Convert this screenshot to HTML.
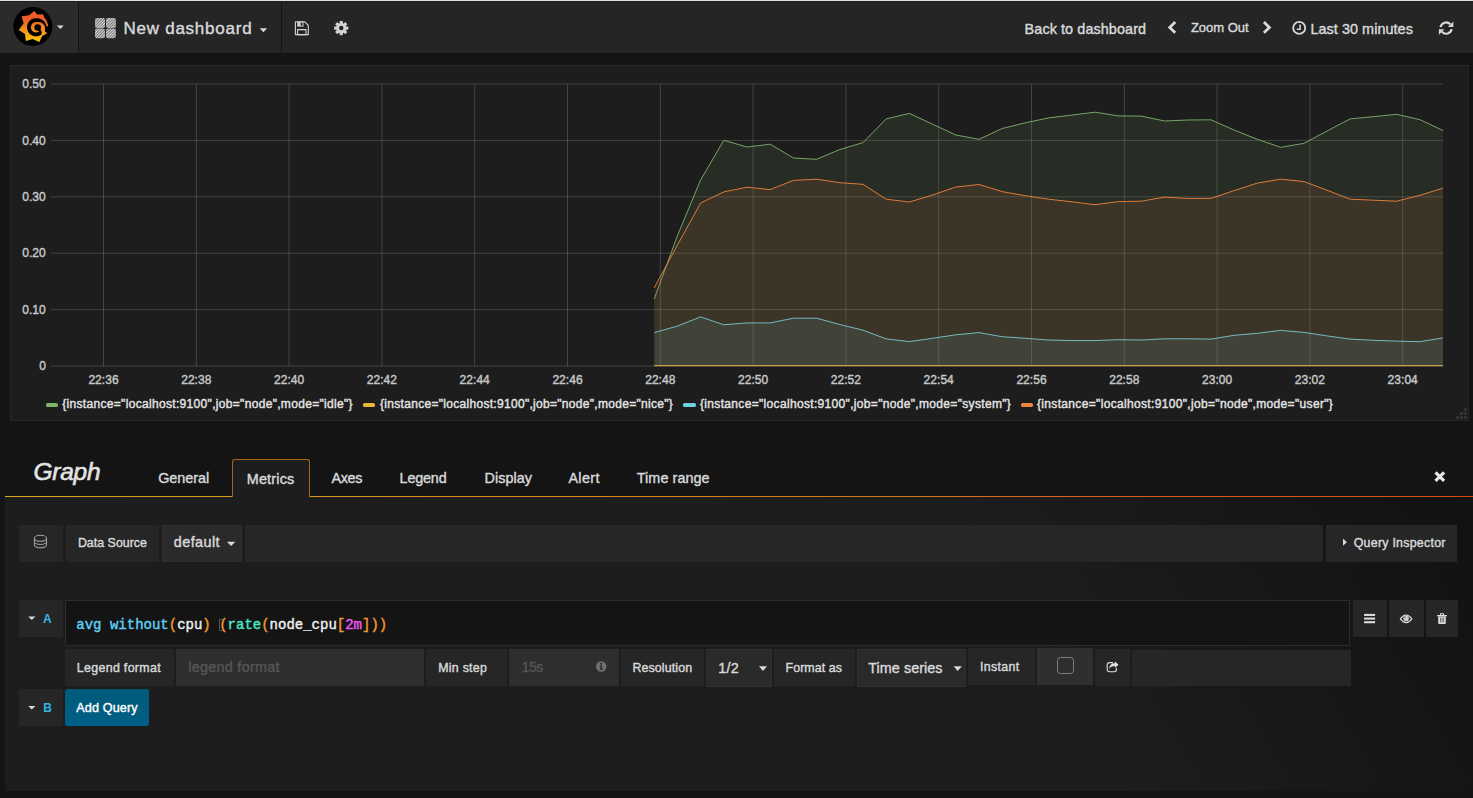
<!DOCTYPE html>
<html lang="en">
<head>
<meta charset="utf-8">
<title>Grafana - New dashboard</title>
<style>
*{box-sizing:border-box;margin:0;padding:0}
html,body{width:1473px;height:798px;overflow:hidden;background:#141414}
body{position:relative;font-family:"Liberation Sans",sans-serif;color:#d8d9da;-webkit-font-smoothing:antialiased}
.abs,.t,.b{position:absolute}
.t{white-space:nowrap;display:block;-webkit-text-stroke:0.4px currentColor}
.b{display:block}
.lbl{background:#262626}
.inp{background:#2e2e2e}
.ic{position:absolute;overflow:visible}
.code{position:absolute;left:76.3px;top:616.3px;-webkit-text-stroke:0.4px currentColor;font-family:"Liberation Mono","DejaVu Sans Mono",monospace;font-size:14px;line-height:19px;white-space:pre;color:#e8e8e8}
</style>
</head>
<body>
<!-- top edge -->
<div class="b" style="left:0;top:0;width:1473px;height:1px;background:#e0e0e0"></div>
<div class="b" style="left:0;top:1px;width:1473px;height:1px;background:#1f1f1f;z-index:2"></div>
<!-- navbar -->
<div class="b" style="left:0;top:1px;width:1473px;height:52px;background:#252525"></div>
<div class="b" style="left:0;top:1px;width:78px;height:52px;background:#2b2b2b"></div>
<div class="b" style="left:78px;top:1px;width:1px;height:52px;background:#141414"></div>
<div class="b" style="left:281px;top:1px;width:1px;height:52px;background:#141414"></div>

<!-- panel -->
<div class="b" style="left:10px;top:65px;width:1459px;height:356px;background:#1d1d1d;border:1px solid #272727"></div>
<svg class="chart" width="1473" height="440" viewBox="0 0 1473 440" style="position:absolute;left:0;top:0">
<line x1="51.0" x2="1443.0" y1="84.00" y2="84.00" stroke="rgba(200,200,200,0.22)" stroke-width="1"/>
<line x1="51.0" x2="1443.0" y1="140.40" y2="140.40" stroke="rgba(200,200,200,0.22)" stroke-width="1"/>
<line x1="51.0" x2="1443.0" y1="196.80" y2="196.80" stroke="rgba(200,200,200,0.22)" stroke-width="1"/>
<line x1="51.0" x2="1443.0" y1="253.20" y2="253.20" stroke="rgba(200,200,200,0.22)" stroke-width="1"/>
<line x1="51.0" x2="1443.0" y1="309.60" y2="309.60" stroke="rgba(200,200,200,0.22)" stroke-width="1"/>
<line x1="51.0" x2="1443.0" y1="366.00" y2="366.00" stroke="rgba(200,200,200,0.22)" stroke-width="1"/>
<line x1="103.50" x2="103.50" y1="84" y2="366.5" stroke="rgba(200,200,200,0.22)" stroke-width="1"/>
<line x1="196.30" x2="196.30" y1="84" y2="366.5" stroke="rgba(200,200,200,0.22)" stroke-width="1"/>
<line x1="289.10" x2="289.10" y1="84" y2="366.5" stroke="rgba(200,200,200,0.22)" stroke-width="1"/>
<line x1="381.90" x2="381.90" y1="84" y2="366.5" stroke="rgba(200,200,200,0.22)" stroke-width="1"/>
<line x1="474.70" x2="474.70" y1="84" y2="366.5" stroke="rgba(200,200,200,0.22)" stroke-width="1"/>
<line x1="567.50" x2="567.50" y1="84" y2="366.5" stroke="rgba(200,200,200,0.22)" stroke-width="1"/>
<line x1="660.30" x2="660.30" y1="84" y2="366.5" stroke="rgba(200,200,200,0.22)" stroke-width="1"/>
<line x1="753.10" x2="753.10" y1="84" y2="366.5" stroke="rgba(200,200,200,0.22)" stroke-width="1"/>
<line x1="845.90" x2="845.90" y1="84" y2="366.5" stroke="rgba(200,200,200,0.22)" stroke-width="1"/>
<line x1="938.70" x2="938.70" y1="84" y2="366.5" stroke="rgba(200,200,200,0.22)" stroke-width="1"/>
<line x1="1031.50" x2="1031.50" y1="84" y2="366.5" stroke="rgba(200,200,200,0.22)" stroke-width="1"/>
<line x1="1124.30" x2="1124.30" y1="84" y2="366.5" stroke="rgba(200,200,200,0.22)" stroke-width="1"/>
<line x1="1217.10" x2="1217.10" y1="84" y2="366.5" stroke="rgba(200,200,200,0.22)" stroke-width="1"/>
<line x1="1309.90" x2="1309.90" y1="84" y2="366.5" stroke="rgba(200,200,200,0.22)" stroke-width="1"/>
<line x1="1402.70" x2="1402.70" y1="84" y2="366.5" stroke="rgba(200,200,200,0.22)" stroke-width="1"/>
<path d="M654.2,366.0 L654.2,299.0 L677.4,235.8 L700.6,180.0 L723.8,140.3 L747.0,147.0 L770.2,144.2 L793.4,158.0 L816.6,159.3 L839.8,149.5 L863.0,142.6 L886.2,118.9 L909.4,113.4 L932.6,124.2 L955.8,135.0 L979.0,139.3 L1002.2,128.5 L1025.4,122.8 L1048.6,117.9 L1071.8,115.1 L1095.0,112.2 L1118.2,115.9 L1141.4,116.1 L1164.6,121.0 L1187.8,120.0 L1211.0,119.8 L1234.2,130.1 L1257.4,139.3 L1280.6,147.3 L1303.8,143.4 L1327.0,131.0 L1350.2,118.9 L1373.4,116.7 L1396.6,114.3 L1419.8,119.6 L1443.0,130.5 L1443.0,366.0 Z" fill="#7EB26D" fill-opacity="0.1"/>
<polyline points="654.2,299.0 677.4,235.8 700.6,180.0 723.8,140.3 747.0,147.0 770.2,144.2 793.4,158.0 816.6,159.3 839.8,149.5 863.0,142.6 886.2,118.9 909.4,113.4 932.6,124.2 955.8,135.0 979.0,139.3 1002.2,128.5 1025.4,122.8 1048.6,117.9 1071.8,115.1 1095.0,112.2 1118.2,115.9 1141.4,116.1 1164.6,121.0 1187.8,120.0 1211.0,119.8 1234.2,130.1 1257.4,139.3 1280.6,147.3 1303.8,143.4 1327.0,131.0 1350.2,118.9 1373.4,116.7 1396.6,114.3 1419.8,119.6 1443.0,130.5" fill="none" stroke="#7EB26D" stroke-width="1" stroke-opacity="0.9" stroke-linejoin="round"/>
<line x1="654.2" x2="1443.0" y1="365.7" y2="365.7" stroke="#c9a036" stroke-width="1.3"/>
<path d="M654.2,366.0 L654.2,332.6 L677.4,326.1 L700.6,316.9 L723.8,324.8 L747.0,322.9 L770.2,322.9 L793.4,318.2 L816.6,318.2 L839.8,324.5 L863.0,330.2 L886.2,338.9 L909.4,341.6 L932.6,338.3 L955.8,334.8 L979.0,332.6 L1002.2,336.7 L1025.4,338.3 L1048.6,340.0 L1071.8,340.6 L1095.0,340.6 L1118.2,339.7 L1141.4,340.0 L1164.6,338.8 L1187.8,338.8 L1211.0,339.1 L1234.2,335.3 L1257.4,333.3 L1280.6,330.4 L1303.8,332.4 L1327.0,335.9 L1350.2,339.1 L1373.4,340.3 L1396.6,341.1 L1419.8,341.7 L1443.0,337.9 L1443.0,366.0 Z" fill="#6ED0E0" fill-opacity="0.1"/>
<polyline points="654.2,332.6 677.4,326.1 700.6,316.9 723.8,324.8 747.0,322.9 770.2,322.9 793.4,318.2 816.6,318.2 839.8,324.5 863.0,330.2 886.2,338.9 909.4,341.6 932.6,338.3 955.8,334.8 979.0,332.6 1002.2,336.7 1025.4,338.3 1048.6,340.0 1071.8,340.6 1095.0,340.6 1118.2,339.7 1141.4,340.0 1164.6,338.8 1187.8,338.8 1211.0,339.1 1234.2,335.3 1257.4,333.3 1280.6,330.4 1303.8,332.4 1327.0,335.9 1350.2,339.1 1373.4,340.3 1396.6,341.1 1419.8,341.7 1443.0,337.9" fill="none" stroke="#6ED0E0" stroke-width="1" stroke-opacity="0.9" stroke-linejoin="round"/>
<path d="M654.2,366.0 L654.2,287.9 L677.4,245.1 L700.6,203.0 L723.8,191.9 L747.0,187.2 L770.2,189.6 L793.4,180.4 L816.6,179.2 L839.8,182.7 L863.0,184.3 L886.2,199.2 L909.4,202.0 L932.6,195.0 L955.8,187.0 L979.0,184.5 L1002.2,191.6 L1025.4,195.7 L1048.6,199.2 L1071.8,201.8 L1095.0,204.7 L1118.2,201.6 L1141.4,201.2 L1164.6,197.1 L1187.8,198.4 L1211.0,198.4 L1234.2,190.6 L1257.4,183.1 L1280.6,179.2 L1303.8,181.5 L1327.0,190.2 L1350.2,199.2 L1373.4,200.2 L1396.6,201.2 L1419.8,195.3 L1443.0,188.2 L1443.0,366.0 Z" fill="#EF843C" fill-opacity="0.1"/>
<polyline points="654.2,287.9 677.4,245.1 700.6,203.0 723.8,191.9 747.0,187.2 770.2,189.6 793.4,180.4 816.6,179.2 839.8,182.7 863.0,184.3 886.2,199.2 909.4,202.0 932.6,195.0 955.8,187.0 979.0,184.5 1002.2,191.6 1025.4,195.7 1048.6,199.2 1071.8,201.8 1095.0,204.7 1118.2,201.6 1141.4,201.2 1164.6,197.1 1187.8,198.4 1211.0,198.4 1234.2,190.6 1257.4,183.1 1280.6,179.2 1303.8,181.5 1327.0,190.2 1350.2,199.2 1373.4,200.2 1396.6,201.2 1419.8,195.3 1443.0,188.2" fill="none" stroke="#EF843C" stroke-width="1" stroke-opacity="0.9" stroke-linejoin="round"/>
</svg>

<!-- legend swatches -->
<div class="b" style="left:45.6px;top:402.8px;width:12.8px;height:3.8px;border-radius:1.6px;background:#7EB26D"></div>
<div class="b" style="left:362.5px;top:402.8px;width:12.8px;height:3.8px;border-radius:1.6px;background:#EAB839"></div>
<div class="b" style="left:683px;top:402.8px;width:12.8px;height:3.8px;border-radius:1.6px;background:#6ED0E0"></div>
<div class="b" style="left:1020.5px;top:402.8px;width:12.8px;height:3.8px;border-radius:1.6px;background:#EF843C"></div>

<!-- editor area -->
<div class="b" style="left:5px;top:497px;width:1468px;height:294px;background:linear-gradient(60deg,rgba(19,18,18,0) 68%,#131212 98%),#1e1d1d"></div>
<div class="b" style="left:5px;top:496px;width:1468px;height:1.3px;background:linear-gradient(90deg,#d9a521 0%,#d9861f 40%,#d24a12 100%)"></div>
<!-- active tab -->
<div class="b" style="left:232px;top:459px;width:78px;height:38px;background:#1e1d1d;border:1px solid #a8641c;border-bottom:none;border-radius:3px 3px 0 0"></div>

<!-- data source row -->
<div class="b lbl" style="left:19px;top:525.2px;width:44px;height:36.4px"></div>
<div class="b lbl" style="left:66px;top:525.2px;width:93px;height:36.4px"></div>
<div class="b inp" style="left:162px;top:525.2px;width:80px;height:36.8px;background:#2a2a2a;border:1px solid #303030"></div>
<div class="b lbl" style="left:245px;top:525.2px;width:1078px;height:36.4px"></div>
<div class="b lbl" style="left:1326px;top:525.2px;width:130.8px;height:36.4px"></div>

<!-- query A -->
<div class="b lbl" style="left:19px;top:600.3px;width:44px;height:36.4px"></div>
<div class="b" style="left:65px;top:600.3px;width:1285px;height:45.4px;background:#141414;border:1px solid #2c2c2c"></div>
<div class="b lbl" style="left:1353px;top:600.3px;width:34px;height:36.4px"></div>
<div class="b lbl" style="left:1389px;top:600.3px;width:35px;height:36.4px"></div>
<div class="b lbl" style="left:1426px;top:600.3px;width:32px;height:36.4px"></div>
<div class="code"><span style="color:#5fd0f5">avg</span> <span style="color:#5fd0f5">without</span><span style="color:#f59a2e">(</span><span style="color:#f0f0f0">cpu</span><span style="color:#f59a2e">)</span> <span style="color:#f59a2e">(</span><span style="color:#4ee6c6">rate</span><span style="color:#f59a2e">(</span><span style="color:#f0f0f0">node_cpu</span><span style="color:#f59a2e">[</span><span style="color:#f05af0">2m</span><span style="color:#f59a2e">]</span><span style="color:#f59a2e">))</span></div>
<div class="b" style="left:218.6px;top:618.6px;width:4.6px;height:12px;border:1px solid #555;border-right:none;border-radius:1px"></div>

<!-- options row -->
<div class="b lbl" style="left:65px;top:649.2px;width:109px;height:36.4px"></div>
<div class="b inp" style="left:176px;top:649.2px;width:248px;height:36.4px"></div>
<div class="b lbl" style="left:426px;top:649.2px;width:81px;height:36.4px"></div>
<div class="b inp" style="left:509px;top:649.2px;width:110px;height:36.4px"></div>
<div class="b lbl" style="left:621px;top:649.2px;width:82.6px;height:36.4px"></div>
<div class="b inp" style="left:706px;top:649.2px;width:66px;height:37.4px;background:#2a2a2a;border:1px solid #303030"></div>
<div class="b lbl" style="left:774px;top:649.2px;width:81px;height:36.4px"></div>
<div class="b inp" style="left:857px;top:649.2px;width:109px;height:37.4px;background:#2a2a2a;border:1px solid #303030"></div>
<div class="b lbl" style="left:968px;top:648px;width:67px;height:36.6px"></div>
<div class="b inp" style="left:1037px;top:648px;width:56px;height:37px;background:#2f2f2f"></div>
<div class="b lbl" style="left:1095px;top:649.2px;width:35px;height:36.4px"></div>
<div class="b lbl" style="left:1132px;top:650.2px;width:219px;height:35.4px"></div>
<div class="b" style="left:1057px;top:657px;width:17px;height:16.6px;border:1.8px solid #808080;border-radius:3.5px;background:#2f2f2f"></div>

<!-- query B -->
<div class="b lbl" style="left:19px;top:689px;width:44px;height:36.6px"></div>
<div class="b" style="left:65px;top:689px;width:84px;height:36.6px;background:linear-gradient(#005a7a,#006088);border-radius:2.5px"></div>

<svg class="ic" style="left:0;top:0" width="1473" height="798" viewBox="0 0 1473 798">
<defs><linearGradient id="gg" x1="0" y1="145" x2="0" y2="640" gradientUnits="userSpaceOnUse">
<stop offset="0" stop-color="#f05a28"/><stop offset="0.25" stop-color="#f05a28"/><stop offset="1" stop-color="#fbca0a"/></linearGradient>
<pattern id="hatch" width="2" height="2" patternUnits="userSpaceOnUse" patternTransform="rotate(-45)"><rect width="2" height="2" fill="#777"/><rect width="2" height="1" fill="#d6d6d6"/></pattern>
</defs>
<g transform="translate(5,2) scale(0.06266)"><circle cx="445" cy="392" r="311" fill="#000"/>
<path fill="url(#gg)" d="M465,143 L517,198 L608,196 L630,250 Q680,300 688,388 L640,395 L640,470 L672,500 L592,545 L548,640 L440,592 L333,624 L318,512 L218,445 L297,345 L266,226 L388,212 Z"/>
<path d="M588,513 L578,521 L567,528 L556,534 L544,538 L532,542 L520,545 L508,546 L495,547 L482,546 L470,545 L458,542 L446,538 L434,534 L423,528 L412,521 L402,513 L393,505 L385,496 L377,486 L370,475 L364,464 L360,452 L356,440 L353,428 L352,416 L351,403 L352,390 L353,378 L356,366 L360,354 L364,342 L370,331 L377,320 L385,310 L393,301 L402,293 L412,285 L423,278 L434,272 L446,268 L458,264 L470,261 L482,260 L495,259 L508,260 L520,261 L533,262 L545,264 L558,268 L570,272 L583,278 L594,285 L605,293 L616,301 L626,311 L635,322 L643,334 L650,347 L656,360 L661,374 L665,388 L667,403 L666,418 L664,433 L661,448 L657,462 L651,476 L634,468 L638,455 L640,442 L642,429 L642,416 L641,403 L636,391 L631,379 L624,368 L617,359 L609,350 L601,342 L592,335 L582,330 L573,325 L563,322 L554,319 L544,318 L535,318 L526,318 L517,320 L509,322 L502,321 L495,321 L488,321 L481,322 L474,324 L467,326 L460,329 L454,332 L448,336 L442,340 L437,345 L432,350 L428,356 L424,362 L421,368 L418,375 L416,382 L414,389 L413,396 L413,403 L413,410 L414,417 L416,424 L418,431 L421,438 L424,444 L428,450 L432,456 L437,461 L442,466 L448,470 L454,474 L460,477 L467,480 L474,482 L481,484 L488,485 L495,485 L502,485 L509,484 L516,482 L523,480 L530,477 L536,474 L542,470 L548,466 Z" fill="#000"/>
<path d="M 540,430 L 576,500" stroke="#000" stroke-width="38" fill="none"/>
<circle cx="522" cy="407" r="53" fill="#000"/></g>
<polygon points="56.90,25.40 63.70,25.40 60.30,28.90" fill="#d8d9da"/>
<polygon points="259.70,28.30 267.10,28.30 263.40,32.20" fill="#d8d9da"/>
<rect x="95.0" y="18.0" width="10.0" height="10.0" rx="2" fill="url(#hatch)"/>
<rect x="106.0" y="18.0" width="9.9" height="10.0" rx="2" fill="url(#hatch)"/>
<rect x="95.0" y="28.6" width="10.0" height="9.7" rx="2" fill="url(#hatch)"/>
<rect x="106.0" y="28.6" width="9.9" height="9.7" rx="2" fill="url(#hatch)"/>
<g fill="none" stroke="#d4d4d4" stroke-width="1.1" stroke-linejoin="round"><path d="M295.4,21.7 h9.2 l3.7,3.7 v9.2 h-12.9 z"/><rect x="297.6" y="29.6" width="8.4" height="5"/></g><rect x="297.3" y="21.7" width="6.2" height="4.9" fill="#d4d4d4"/><rect x="300.6" y="22.6" width="1.9" height="3" fill="#252525"/>
<g transform="translate(341.25,28.1)" fill="#d4d4d4"><circle r="5.2"/><rect x="-1.55" y="-7.1" width="3.1" height="3.4" transform="rotate(0)"/><rect x="-1.55" y="-7.1" width="3.1" height="3.4" transform="rotate(45)"/><rect x="-1.55" y="-7.1" width="3.1" height="3.4" transform="rotate(90)"/><rect x="-1.55" y="-7.1" width="3.1" height="3.4" transform="rotate(135)"/><rect x="-1.55" y="-7.1" width="3.1" height="3.4" transform="rotate(180)"/><rect x="-1.55" y="-7.1" width="3.1" height="3.4" transform="rotate(225)"/><rect x="-1.55" y="-7.1" width="3.1" height="3.4" transform="rotate(270)"/><rect x="-1.55" y="-7.1" width="3.1" height="3.4" transform="rotate(315)"/><circle r="2.25" fill="#252525"/></g>
<polyline points="1175.2,22.1 1169.7,27.4 1175.2,32.7" fill="none" stroke="#d8d9da" stroke-width="2.8"/>
<polyline points="1263.9,22.1 1269.4,27.4 1263.9,32.7" fill="none" stroke="#d8d9da" stroke-width="2.8"/>
<circle cx="1299.2" cy="27.95" r="6.0" fill="none" stroke="#d8d9da" stroke-width="1.8"/><path d="M1300.1,24.4 V29.3 H1296.8" fill="none" stroke="#d8d9da" stroke-width="1.5"/>
<g fill="none" stroke="#d8d9da" stroke-width="2.2"><path d="M1440.59,27.13 A5.60,5.60 0 0 1 1450.26,24.35"/><path d="M1451.61,29.07 A5.60,5.60 0 0 1 1441.94,31.85"/></g>
<polygon points="1453.3,21.6 1453.3,27.0 1447.9,27.0" fill="#d8d9da"/>
<polygon points="1438.9,34.7 1438.9,29.3 1444.3,29.3" fill="#d8d9da"/>
<circle cx="1465.40" cy="417.60" r="1.4" fill="#3f3f3f"/>
<circle cx="1461.45" cy="417.60" r="1.4" fill="#3f3f3f"/>
<circle cx="1457.50" cy="417.60" r="1.4" fill="#3f3f3f"/>
<circle cx="1465.40" cy="413.60" r="1.4" fill="#3f3f3f"/>
<circle cx="1461.45" cy="413.60" r="1.4" fill="#3f3f3f"/>
<circle cx="1465.40" cy="409.60" r="1.4" fill="#3f3f3f"/>
<path d="M1435.5,472.3 L1444.1,480.9 M1444.1,472.3 L1435.5,480.9" stroke="#e6e6e6" stroke-width="3.2" fill="none"/>
<g fill="none" stroke="#a0a0a0" stroke-width="1.05"><ellipse cx="40.45" cy="538.3" rx="6.1" ry="3.0"/><path d="M34.35,538.3 v3.2 a6.1,3.0 0 0 0 12.2,0 v-3.2"/><path d="M34.35,541.5 v3.3 a6.1,3.0 0 0 0 12.2,0 v-3.3"/></g>
<polygon points="226.90,541.80 235.30,541.80 231.10,546.10" fill="#d8d9da"/>
<polygon points="1343.0,538.6 1346.9,542.2 1343.0,545.8" fill="#d8d9da"/>
<polygon points="28.20,616.50 35.40,616.50 31.80,620.10" fill="#d8d9da"/>
<polygon points="28.20,705.90 35.40,705.90 31.80,709.50" fill="#d8d9da"/>
<rect x="1364.1" y="613.90" width="11" height="2.05" fill="#e0e0e0"/>
<rect x="1364.1" y="617.55" width="11" height="2.05" fill="#e0e0e0"/>
<rect x="1364.1" y="621.20" width="11" height="2.05" fill="#e0e0e0"/>
<path d="M1400.3,618.9 Q1406.1,611.2 1411.9,618.9 Q1406.1,626.4 1400.3,618.9 Z" fill="none" stroke="#e0e0e0" stroke-width="1.1"/><circle cx="1406.1" cy="618.5" r="2.75" fill="#d0d0d0"/><circle cx="1405.2" cy="617.4" r="0.9" fill="#8a8a8a"/>
<g fill="#dcdcdc"><rect x="1437.1" y="615.0" width="9.8" height="1.4"/><path d="M1440.0,615 v-1.7 h4.0 v1.7 h-1.0 v-0.8 h-2.0 v0.8 z"/><path d="M1438.2,616.4 h7.6 v6.5 a1,1 0 0 1 -1,1 h-5.6 a1,1 0 0 1 -1,-1 z"/></g><g fill="#6a6a6a"><rect x="1440.1" y="617.6" width="0.9" height="4.8"/><rect x="1441.6" y="617.6" width="0.9" height="4.8"/><rect x="1443.1" y="617.6" width="0.9" height="4.8"/></g>
<circle cx="601.2" cy="666.45" r="5.2" fill="#707070"/><rect x="600.4" y="665.6" width="1.7" height="3.8" fill="#2d2d2d"/><rect x="599.6" y="665.6" width="1.6" height="0.9" fill="#2d2d2d"/><rect x="599.6" y="668.7" width="3.3" height="0.9" fill="#2d2d2d"/><rect x="600.3" y="662.9" width="1.8" height="1.7" fill="#2d2d2d"/>
<polygon points="759.00,666.30 767.00,666.30 763.00,670.90" fill="#d8d9da"/>
<polygon points="953.60,666.30 961.80,666.30 957.70,670.90" fill="#d8d9da"/>
<path d="M1113.0,662.6 h-3.6 a2.2,2.2 0 0 0 -2.2,2.2 v4.8 a2.2,2.2 0 0 0 2.2,2.2 h4.8 a2.2,2.2 0 0 0 2.2,-2.2 v-1.6" fill="none" stroke="#e0e0e0" stroke-width="1.1"/><path d="M1118.5,664.7 l-3.6,-3.4 v2.0 c-3.6,0 -5.4,1.8 -5.6,5.6 c1.2,-2.0 2.8,-2.8 5.6,-2.8 v2.0 z" fill="#e0e0e0"/>
</svg>
<span class="t" id="t0" style="left:123.40px;top:19px;font-size:17px;line-height:19px;color:#d8d9da;letter-spacing:0.762px;">New dashboard</span>
<span class="t" id="t1" style="left:1024.60px;top:21px;font-size:14.4px;line-height:16px;color:#d8d9da;letter-spacing:0.090px;">Back to dashboard</span>
<span class="t" id="t2" style="left:1190.90px;top:20px;font-size:13px;line-height:15px;color:#d8d9da;letter-spacing:-0.014px;">Zoom Out</span>
<span class="t" id="t3" style="left:1310.40px;top:21px;font-size:14.4px;line-height:16px;color:#d8d9da;letter-spacing:0.062px;">Last 30 minutes</span>
<span class="t" id="t4" style="left:22.20px;top:77px;font-size:12px;line-height:14px;color:#c8c8c8;letter-spacing:0.067px;">0.50</span>
<span class="t" id="t5" style="left:22.20px;top:134px;font-size:12px;line-height:14px;color:#c8c8c8;letter-spacing:0.067px;">0.40</span>
<span class="t" id="t6" style="left:22.20px;top:190px;font-size:12px;line-height:14px;color:#c8c8c8;letter-spacing:0.067px;">0.30</span>
<span class="t" id="t7" style="left:22.20px;top:246px;font-size:12px;line-height:14px;color:#c8c8c8;letter-spacing:0.067px;">0.20</span>
<span class="t" id="t8" style="left:22.20px;top:303px;font-size:12px;line-height:14px;color:#c8c8c8;letter-spacing:0.067px;">0.10</span>
<span class="t" id="t9" style="left:39.30px;top:359px;font-size:12px;line-height:14px;color:#c8c8c8;letter-spacing:0.000px;">0</span>
<span class="t" id="t10" style="left:88.40px;top:373px;font-size:12px;line-height:14px;color:#c8c8c8;letter-spacing:0.037px;">22:36</span>
<span class="t" id="t11" style="left:181.20px;top:373px;font-size:12px;line-height:14px;color:#c8c8c8;letter-spacing:0.037px;">22:38</span>
<span class="t" id="t12" style="left:274.00px;top:373px;font-size:12px;line-height:14px;color:#c8c8c8;letter-spacing:0.035px;">22:40</span>
<span class="t" id="t13" style="left:366.80px;top:373px;font-size:12px;line-height:14px;color:#c8c8c8;letter-spacing:0.035px;">22:42</span>
<span class="t" id="t14" style="left:459.60px;top:373px;font-size:12px;line-height:14px;color:#c8c8c8;letter-spacing:0.035px;">22:44</span>
<span class="t" id="t15" style="left:552.40px;top:373px;font-size:12px;line-height:14px;color:#c8c8c8;letter-spacing:0.035px;">22:46</span>
<span class="t" id="t16" style="left:645.20px;top:373px;font-size:12px;line-height:14px;color:#c8c8c8;letter-spacing:0.035px;">22:48</span>
<span class="t" id="t17" style="left:738.00px;top:373px;font-size:12px;line-height:14px;color:#c8c8c8;letter-spacing:0.035px;">22:50</span>
<span class="t" id="t18" style="left:830.80px;top:373px;font-size:12px;line-height:14px;color:#c8c8c8;letter-spacing:0.035px;">22:52</span>
<span class="t" id="t19" style="left:923.60px;top:373px;font-size:12px;line-height:14px;color:#c8c8c8;letter-spacing:0.035px;">22:54</span>
<span class="t" id="t20" style="left:1016.40px;top:373px;font-size:12px;line-height:14px;color:#c8c8c8;letter-spacing:0.037px;">22:56</span>
<span class="t" id="t21" style="left:1109.20px;top:373px;font-size:12px;line-height:14px;color:#c8c8c8;letter-spacing:0.037px;">22:58</span>
<span class="t" id="t22" style="left:1202.00px;top:373px;font-size:12px;line-height:14px;color:#c8c8c8;letter-spacing:0.037px;">23:00</span>
<span class="t" id="t23" style="left:1294.80px;top:373px;font-size:12px;line-height:14px;color:#c8c8c8;letter-spacing:0.037px;">23:02</span>
<span class="t" id="t24" style="left:1387.60px;top:373px;font-size:12px;line-height:14px;color:#c8c8c8;letter-spacing:0.037px;">23:04</span>
<span class="t" id="t25" style="left:62.20px;top:397px;font-size:12px;line-height:14px;color:#e4e4e4;letter-spacing:0.320px;">{instance=&quot;localhost:9100&quot;,job=&quot;node&quot;,mode=&quot;idle&quot;}</span>
<span class="t" id="t26" style="left:380.00px;top:397px;font-size:12px;line-height:14px;color:#e4e4e4;letter-spacing:0.301px;">{instance=&quot;localhost:9100&quot;,job=&quot;node&quot;,mode=&quot;nice&quot;}</span>
<span class="t" id="t27" style="left:700.00px;top:397px;font-size:12px;line-height:14px;color:#e4e4e4;letter-spacing:0.328px;">{instance=&quot;localhost:9100&quot;,job=&quot;node&quot;,mode=&quot;system&quot;}</span>
<span class="t" id="t28" style="left:1037.00px;top:397px;font-size:12px;line-height:14px;color:#e4e4e4;letter-spacing:0.335px;">{instance=&quot;localhost:9100&quot;,job=&quot;node&quot;,mode=&quot;user&quot;}</span>
<span class="t" id="t29" style="left:33.40px;top:458px;font-size:24.5px;line-height:27px;color:#e3e3e3;letter-spacing:-0.223px;font-style:italic;-webkit-text-stroke:0.6px currentColor;">Graph</span>
<span class="t" id="t30" style="left:158.20px;top:470px;font-size:14.4px;line-height:16px;color:#d8d9da;letter-spacing:-0.031px;">General</span>
<span class="t" id="t31" style="left:246.70px;top:471px;font-size:14.4px;line-height:16px;color:#d8d9da;letter-spacing:0.202px;">Metrics</span>
<span class="t" id="t32" style="left:331.60px;top:470px;font-size:14.4px;line-height:16px;color:#d8d9da;letter-spacing:-0.402px;">Axes</span>
<span class="t" id="t33" style="left:399.60px;top:470px;font-size:14.4px;line-height:16px;color:#d8d9da;letter-spacing:-0.188px;">Legend</span>
<span class="t" id="t34" style="left:484.50px;top:470px;font-size:14.4px;line-height:16px;color:#d8d9da;letter-spacing:0.047px;">Display</span>
<span class="t" id="t35" style="left:568.40px;top:470px;font-size:14.4px;line-height:16px;color:#d8d9da;letter-spacing:0.356px;">Alert</span>
<span class="t" id="t36" style="left:636.80px;top:470px;font-size:14.4px;line-height:16px;color:#d8d9da;letter-spacing:0.058px;">Time range</span>
<span class="t" id="t37" style="left:77.90px;top:536px;font-size:12.4px;line-height:14px;color:#d8d9da;letter-spacing:0.021px;">Data Source</span>
<span class="t" id="t38" style="left:173.80px;top:534px;font-size:14.4px;line-height:16px;color:#d8d9da;letter-spacing:0.430px;">default</span>
<span class="t" id="t39" style="left:1353.70px;top:536px;font-size:12.4px;line-height:14px;color:#d8d9da;letter-spacing:0.258px;">Query Inspector</span>
<span class="t" id="t40" style="left:42.90px;top:612px;font-size:12px;line-height:14px;color:#33b5e5;letter-spacing:0.000px;font-weight:bold;-webkit-text-stroke:0;">A</span>
<span class="t" id="t41" style="left:43.30px;top:701px;font-size:12px;line-height:14px;color:#33b5e5;letter-spacing:0.000px;font-weight:bold;-webkit-text-stroke:0;">B</span>
<span class="t" id="t42" style="left:76.80px;top:661px;font-size:12.4px;line-height:14px;color:#d8d9da;letter-spacing:0.327px;">Legend format</span>
<span class="t" id="t43" style="left:188.20px;top:659px;font-size:14.4px;line-height:16px;color:#555555;letter-spacing:0.280px;">legend format</span>
<span class="t" id="t44" style="left:438.30px;top:661px;font-size:12.4px;line-height:14px;color:#d8d9da;letter-spacing:0.236px;">Min step</span>
<span class="t" id="t45" style="left:521.70px;top:659px;font-size:14.0px;line-height:16px;color:#555555;letter-spacing:-0.474px;">15s</span>
<span class="t" id="t46" style="left:632.40px;top:661px;font-size:12.4px;line-height:14px;color:#d8d9da;letter-spacing:0.131px;">Resolution</span>
<span class="t" id="t47" style="left:718.30px;top:660px;font-size:14.4px;line-height:16px;color:#d8d9da;letter-spacing:0.237px;">1/2</span>
<span class="t" id="t48" style="left:785.50px;top:661px;font-size:12.4px;line-height:14px;color:#d8d9da;letter-spacing:0.084px;">Format as</span>
<span class="t" id="t49" style="left:868.30px;top:660px;font-size:14.4px;line-height:16px;color:#d8d9da;letter-spacing:0.035px;">Time series</span>
<span class="t" id="t50" style="left:980.00px;top:660px;font-size:12.4px;line-height:14px;color:#d8d9da;letter-spacing:0.322px;">Instant</span>
<span class="t" id="t51" style="left:76.30px;top:701px;font-size:12.6px;line-height:14px;color:#ffffff;letter-spacing:0.129px;">Add Query</span>
</body>
</html>
